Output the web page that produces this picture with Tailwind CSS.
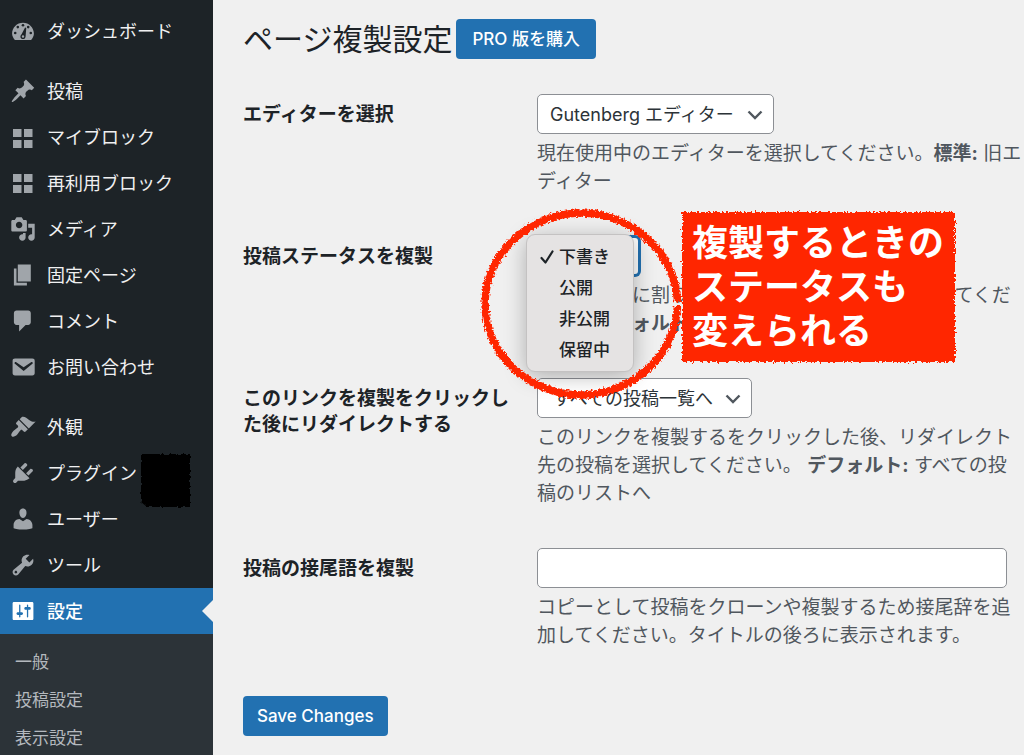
<!DOCTYPE html>
<html lang="ja">
<head>
<meta charset="utf-8">
<meta name="viewport" content="width=device-width, initial-scale=1">
<title>ページ複製設定</title>
<script src="https://cdn.jsdelivr.net/npm/@tailwindcss/browser@4"></script>
</head>
<body class="bg-[#f0f0f0] font-['Inter','Noto_Sans_CJK_JP',sans-serif] text-[#1d2327]">
<div class="relative flex h-screen overflow-hidden">

  <!-- Admin menu -->
  <nav class="w-[213px] shrink-0 bg-[#1d2327] pt-2 text-[18px] text-[#f0f0f1]" aria-label="メインメニュー">
    <a href="#" class="flex h-[46px] items-center gap-[11px] pl-[10px]">
      <svg class="size-[26px] shrink-0" viewBox="0 0 20 20" fill="#a0a5aa"><path d="M3.76 17h12.48c1.34-1.51 2.15-3.45 2.15-5.05C18.39 7.32 14.63 3.56 10 3.56S1.61 7.32 1.61 11.95c0 1.6.81 3.54 2.15 5.05z"/><g fill="#1d2327"><circle cx="10" cy="5.6" r="1"/><circle cx="6" cy="7" r="1"/><circle cx="14" cy="7" r="1"/><circle cx="4" cy="11.5" r="1"/><circle cx="16" cy="11.5" r="1"/><path d="M11.6 7.4l.9.2-.5 6.6c-.1 1.200-.9 2-2 2-1.200 0-2.100-.9-2-2 .05-.7.400-1.200.9-1.700z"/></g><circle cx="10" cy="14.200" r=".9"/></svg>
      <span>ダッシュボード</span>
    </a>
    <div class="mt-[14px]">
      <a href="#" class="flex h-[46px] items-center gap-[11px] pl-[10px]">
        <svg class="size-[26px] shrink-0" viewBox="0 0 20 20" fill="#a0a5aa"><path d="M10.440 3.020l1.820-1.820 6.360 6.350-1.830 1.820c-1.050-.68-2.480-.57-3.410.36l-.75.75c-.92.93-1.040 2.350-.35 3.410l-1.830 1.820-2.410-2.410-2.800 2.790c-.42.42-3.380 2.710-3.800 2.290s1.860-3.390 2.280-3.810l2.790-2.790L4.100 9.360l1.830-1.820c1.050.69 2.480.57 3.400-.36l.75-.75c.93-.92 1.050-2.350.36-3.410z"/></svg>
        <span>投稿</span>
      </a>
      <a href="#" class="flex h-[46px] items-center gap-[11px] pl-[10px]">
        <svg class="size-[26px] shrink-0" viewBox="0 0 26 26" fill="#a0a5aa"><path d="M3 5h8.500v8H3zM14 5h8.500v8H14zM3 16h8.500v8H3zM14 16h8.500v8H14z"/></svg>
        <span>マイブロック</span>
      </a>
      <a href="#" class="flex h-[46px] items-center gap-[11px] pl-[10px]">
        <svg class="size-[26px] shrink-0" viewBox="0 0 26 26" fill="#a0a5aa"><path d="M3 4h8.500v8H3zM14 4h8.500v8H14zM3 15h8.500v8H3zM14 15h8.500v8H14z"/></svg>
        <span>再利用ブロック</span>
      </a>
      <a href="#" class="flex h-[46px] items-center gap-[11px] pl-[10px]">
        <svg class="size-[26px] shrink-0" viewBox="0 0 20 20" fill="#a0a5aa"><path d="M13 11V4c0-.55-.45-1-1-1h-1.670L9 1H5L3.670 3H2c-.55 0-1 .45-1 1v7c0 .55.45 1 1 1h10c.55 0 1-.45 1-1zM7 4.500c1.380 0 2.500 1.120 2.500 2.500S8.380 9.500 7 9.500 4.500 8.380 4.500 7 5.620 4.500 7 4.500zM14 6h5v10.500c0 1.380-1.120 2.500-2.500 2.500S14 17.880 14 16.500s1.120-2.500 2.500-2.500c.17 0 .34.02.5.05V9h-3V6zm-4 8.050V13h2v3.500c0 1.380-1.120 2.500-2.500 2.500S7 17.880 7 16.500 8.120 14 9.500 14c.17 0 .34.02.5.05z"/></svg>
        <span>メディア</span>
      </a>
      <a href="#" class="flex h-[46px] items-center gap-[11px] pl-[10px]">
        <svg class="size-[26px] shrink-0" viewBox="0 0 20 20" fill="#a0a5aa"><path d="M6 15V2h10v13H6zm-1 1h8v2H3V5h2v11z"/></svg>
        <span>固定ページ</span>
      </a>
      <a href="#" class="flex h-[46px] items-center gap-[11px] pl-[10px]">
        <svg class="size-[26px] shrink-0" viewBox="0 0 20 20" fill="#a0a5aa"><path d="M5 2h9c1.100 0 2 .9 2 2v7c0 1.100-.9 2-2 2h-2l-5 5v-5H5c-1.100 0-2-.9-2-2V4c0-1.100.9-2 2-2z"/></svg>
        <span>コメント</span>
      </a>
      <a href="#" class="flex h-[46px] items-center gap-[11px] pl-[10px]">
        <svg class="size-[26px] shrink-0" viewBox="0 0 20 20" fill="#a0a5aa"><path d="M3.870 3.500h13.250C18.370 3.500 19 4.090 19 5.290v9.420c0 1.190-.63 1.790-1.880 1.790H3.870c-1.250 0-1.880-.6-1.880-1.790V5.290c0-1.200.63-1.790 1.880-1.790zm6.620 9.600l6.740-5.530c.24-.2.430-.66.130-1.070-.29-.41-.82-.42-1.170-.17l-5.700 3.860L4.800 6.330c-.35-.25-.88-.24-1.170.17-.3.410-.11.870.13 1.070z"/></svg>
        <span>お問い合わせ</span>
      </a>
    </div>
    <div class="mt-[14px]">
      <a href="#" class="flex h-[46px] items-center gap-[11px] pl-[10px]">
        <svg class="size-[26px] shrink-0" viewBox="0 0 20 20" fill="#a0a5aa"><path d="M14.480 11.060L7.410 3.990l1.500-1.500c.5-.56 2.300-.47 3.510.32 1.210.8 1.430 1.280 2.910 2.100 1.180.64 2.450 1.260 4.450.85zm-.71.71L6.700 4.700 4.930 6.470c-.39.39-.39 1.020 0 1.410l1.060 1.060c.39.39.39 1.030 0 1.420-.6.6-1.430 1.110-2.210 1.690-.35.26-.7.53-1.010.84C1.430 14.230.4 16.080 1.400 17.070c.99 1 2.840-.03 4.180-1.360.31-.31.58-.66.85-1.020.57-.78 1.080-1.610 1.690-2.210.39-.39 1.020-.39 1.410 0l1.060 1.060c.39.39 1.020.39 1.410 0z"/></svg>
        <span>外観</span>
      </a>
      <a href="#" class="relative flex h-[46px] items-center gap-[11px] pl-[10px]">
        <svg class="size-[26px] shrink-0" viewBox="0 0 20 20" fill="#a0a5aa"><path d="M13.110 4.360L9.870 7.600 8 5.730l3.240-3.240c.35-.34 1.050-.2 1.560.32.52.51.66 1.210.31 1.550zm-8 1.770l.91-1.120 9.010 9.010-1.190.84c-.71.71-2.630 1.160-3.820 1.160H6.140L4.900 17.260c-.59.59-1.540.59-2.120 0-.59-.58-.59-1.530 0-2.120l1.240-1.240v-3.880c0-1.130.4-3.190 1.090-3.890zm7.260 3.970l3.240-3.240c.34-.35 1.040-.21 1.550.31.52.51.66 1.210.31 1.550l-3.240 3.250z"/></svg>
        <span>プラグイン</span>
        <svg class="absolute left-[136px] top-0 h-[60px] w-[58px]" viewBox="0 0 58 60" aria-hidden="true"><path filter="url(#rough-small)" d="M5 4H54V57H11L5 52Z"/></svg>
      </a>
      <a href="#" class="flex h-[46px] items-center gap-[11px] pl-[10px]">
        <svg class="size-[26px] shrink-0" viewBox="0 0 20 20" fill="#a0a5aa"><path d="M10 9.250c-2.270 0-2.730-3.440-2.730-3.440C7 4.020 7.820 2 9.970 2c2.160 0 2.980 2.020 2.710 3.810 0 0-.41 3.440-2.680 3.440zm0 2.570L12.720 10c2.390 0 4.520 2.330 4.520 4.530v2.490s-3.650 1.130-7.240 1.130c-3.650 0-7.240-1.130-7.240-1.130v-2.490c0-2.250 1.940-4.480 4.470-4.480z"/></svg>
        <span>ユーザー</span>
      </a>
      <a href="#" class="flex h-[46px] items-center gap-[11px] pl-[10px]">
        <svg class="size-[26px] shrink-0" viewBox="0 0 20 20" fill="#a0a5aa"><path d="M16.680 9.770c-1.340 1.340-3.300 1.670-4.950.99l-5.410 6.520c-.99.99-2.590.99-3.580 0s-.99-2.590 0-3.570l6.520-5.420c-.68-1.650-.35-3.610.99-4.950 1.280-1.280 3.120-1.620 4.720-1.060l-2.890 2.890 2.820 2.820 2.860-2.870c.53 1.580.18 3.390-1.080 4.650zM3.810 16.210c.4.39 1.040.39 1.430 0 .4-.4.4-1.040 0-1.430-.39-.4-1.030-.4-1.430 0-.39.39-.39 1.030 0 1.430z"/></svg>
        <span>ツール</span>
      </a>
      <a href="#" aria-current="page" class="relative flex h-[46px] items-center gap-[11px] bg-[#2271b1] pl-[10px] font-medium text-white">
        <svg class="size-[26px] shrink-0" viewBox="0 0 20 20" fill="#fff"><path d="M18 16V4c0-.55-.45-1-1-1H3c-.55 0-1 .45-1 1v12c0 .55.45 1 1 1h14c.55 0 1-.45 1-1zM8 11h1c.55 0 1 .45 1 1s-.45 1-1 1H8v1.500c0 .28-.22.5-.5.5s-.5-.22-.5-.5V13H6c-.55 0-1-.45-1-1s.45-1 1-1h1V5.500c0-.28.22-.5.5-.5s.5.22.5.5V11zm5-2h-1c-.55 0-1-.45-1-1s.45-1 1-1h1V5.500c0-.28.22-.5.5-.5s.5.22.5.5V7h1c.55 0 1 .45 1 1s-.45 1-1 1h-1v5.500c0 .28-.22.5-.5.5s-.5-.22-.5-.5V9z"/></svg>
        <span>設定</span>
        <svg class="absolute right-0 top-3 h-[22px] w-[11px]" viewBox="0 0 11 22" fill="#f0f0f0" aria-hidden="true"><path d="M11 0V22L0 11Z"/></svg>
      </a>
    </div>
    <div class="h-full bg-[#2c3338] pt-[10px] text-[17px] text-[#b4b9be]">
      <a href="#" class="flex h-[38px] items-center pl-[15px]">一般</a>
      <a href="#" class="flex h-[38px] items-center pl-[15px]">投稿設定</a>
      <a href="#" class="flex h-[38px] items-center pl-[15px]">表示設定</a>
    </div>
  </nav>

  <!-- Settings form -->
  <main class="min-w-0 flex-1 pl-[30px] pt-[19px]">
    <div class="flex items-center gap-1">
      <h1 class="text-[30px] leading-[40px]">ページ複製設定</h1>
      <a href="#" class="flex h-10 items-center rounded-[4px] bg-[#2271b1] px-4 pt-[2px] text-[17px] font-medium text-white">PRO 版を購入</a>
    </div>
    <form class="pt-[14px]">
      <div class="grid grid-cols-[270px_1fr] gap-x-6 pb-5 pt-[21px]">
        <label for="editor" class="pt-2 text-[19px] font-bold leading-[26px]">エディターを選択</label>
        <div>
          <div class="relative w-[237px]">
            <select id="editor" class="h-10 w-full appearance-none rounded-[5px] border border-[#8c8f94] bg-white pl-3 pr-8 text-[18px] text-[#2c3338]"><option>Gutenberg エディター</option></select>
            <svg class="pointer-events-none absolute right-[11px] top-[13px] size-4" viewBox="0 0 16 16" fill="none" stroke="#50575e" stroke-width="2.400" aria-hidden="true"><path d="M1.500 4.500L8 11l6.500-6.500"/></svg>
          </div>
          <p class="-mb-px mt-[6px] text-[19px] leading-[28px] text-[#50575e]">現在使用中のエディターを選択してください。<b>標準:</b> 旧エディター</p>
        </div>
      </div>

      <div class="grid grid-cols-[270px_1fr] gap-x-6 pb-5 pt-[21px]">
        <label for="status" class="pt-2 text-[19px] font-bold leading-[26px]">投稿ステータスを複製</label>
        <div class="relative">
          <select id="status" class="block h-10 w-[103px] appearance-none rounded-[5px] border-2 border-[#2271b1] bg-white pl-3 text-[18px] text-[#2c3338] ring-1 ring-[#2271b1]"><option>下書き</option><option>公開</option><option>非公開</option><option>保留中</option></select>
          <p class="-mb-px mt-[6px] text-[19px] leading-[28px] text-[#50575e]">複製の投稿に割り当てる投稿ステータスを選択してください。<b>デフォルト:</b> 下書き</p>

          <!-- Open option list -->
          <ul class="absolute -left-[11px] -top-[2px] z-10 w-[108px] rounded-[9px] border border-[#c4c2c2] bg-[#e5e3e3] pb-[5px] pt-[7px] text-[17px] font-medium leading-[31px] text-[#1d2327] shadow-[0_4px_22px_rgba(0,0,0,0.28)]">
            <li class="relative pl-8"><svg class="absolute left-3 top-2 size-4" viewBox="0 0 16 16" fill="none" stroke="#1d2327" stroke-width="2.200" stroke-linecap="round" stroke-linejoin="round" aria-hidden="true"><path d="M2.500 8l4 4.500 7-11"/></svg>下書き</li>
            <li class="pl-8">公開</li>
            <li class="pl-8">非公開</li>
            <li class="pl-8">保留中</li>
          </ul>
        </div>
      </div>

      <div class="grid grid-cols-[270px_1fr] gap-x-6 pb-5 pt-[21px]">
        <label for="redirect" class="pt-2 text-[19px] font-bold leading-[26px]">このリンクを複製をクリックした後にリダイレクトする</label>
        <div>
          <div class="relative w-[215px]">
            <select id="redirect" class="h-10 w-full appearance-none rounded-[5px] border border-[#8c8f94] bg-white pl-[15px] pr-8 text-[18px] text-[#2c3338]"><option>すべての投稿一覧へ</option></select>
            <svg class="pointer-events-none absolute right-[11px] top-[13px] size-4" viewBox="0 0 16 16" fill="none" stroke="#50575e" stroke-width="2.400" aria-hidden="true"><path d="M1.500 4.500L8 11l6.500-6.500"/></svg>
          </div>
          <p class="-mb-px mt-[6px] text-[19px] leading-[28px] text-[#50575e]">このリンクを複製するをクリックした後、リダイレクト先の投稿を選択してください。 <b>デフォルト:</b> すべての投稿のリストへ</p>
        </div>
      </div>

      <div class="grid grid-cols-[270px_1fr] gap-x-6 pb-5 pt-[21px]">
        <label for="suffix" class="pt-2 text-[19px] font-bold leading-[26px]">投稿の接尾語を複製</label>
        <div>
          <div class="pr-[17px]"><input id="suffix" type="text" class="block h-10 w-full rounded-[5px] border border-[#8c8f94] bg-white px-3 text-[18px]"></div>
          <p class="-mb-px mt-[6px] text-[19px] leading-[28px] text-[#50575e]">コピーとして投稿をクローンや複製するため接尾辞を追加してください。タイトルの後ろに表示されます。</p>
        </div>
      </div>

      <button type="button" class="mt-[27px] h-10 rounded-[4px] bg-[#2271b1] px-[14px] pt-[2px] text-[17px] font-medium text-white">Save Changes</button>
    </form>
  </main>

  <!-- Hand-drawn annotations -->
  <svg class="pointer-events-none absolute left-[470px] top-[198px] z-20 h-[212px] w-[222px]" viewBox="0 0 222 212" fill="none" aria-hidden="true">
    <defs>
      <filter id="rough" x="-10%" y="-10%" width="120%" height="120%"><feTurbulence type="fractalNoise" baseFrequency="0.450" numOctaves="2" seed="4"/><feDisplacementMap in="SourceGraphic" scale="6" xChannelSelector="R" yChannelSelector="G"/></filter>
      <filter id="rough-small" x="-10%" y="-10%" width="120%" height="120%"><feTurbulence type="fractalNoise" baseFrequency="0.300" numOctaves="2" seed="7"/><feDisplacementMap in="SourceGraphic" scale="4" xChannelSelector="R" yChannelSelector="G"/></filter>
    </defs>
    <path filter="url(#rough)" stroke="#ff2600" stroke-width="7.500" d="M207.500 104C206 55 162 15 111 15S15 55 15 106s45 91 96 91 95-40 96.500-89"/>
  </svg>
  <div class="absolute left-[682px] top-[212px] z-20 w-[274px] pb-[9px] pl-[10px] pt-[9px]">
    <svg class="absolute inset-0 size-full overflow-visible" aria-hidden="true"><rect filter="url(#rough)" width="273" height="150" fill="#ff2600"/></svg>
    <p class="relative text-[36px] font-bold leading-[44px] text-white">複製するときの<br>ステータスも<br>変えられる</p>
  </div>
</div>
</body>
</html>
